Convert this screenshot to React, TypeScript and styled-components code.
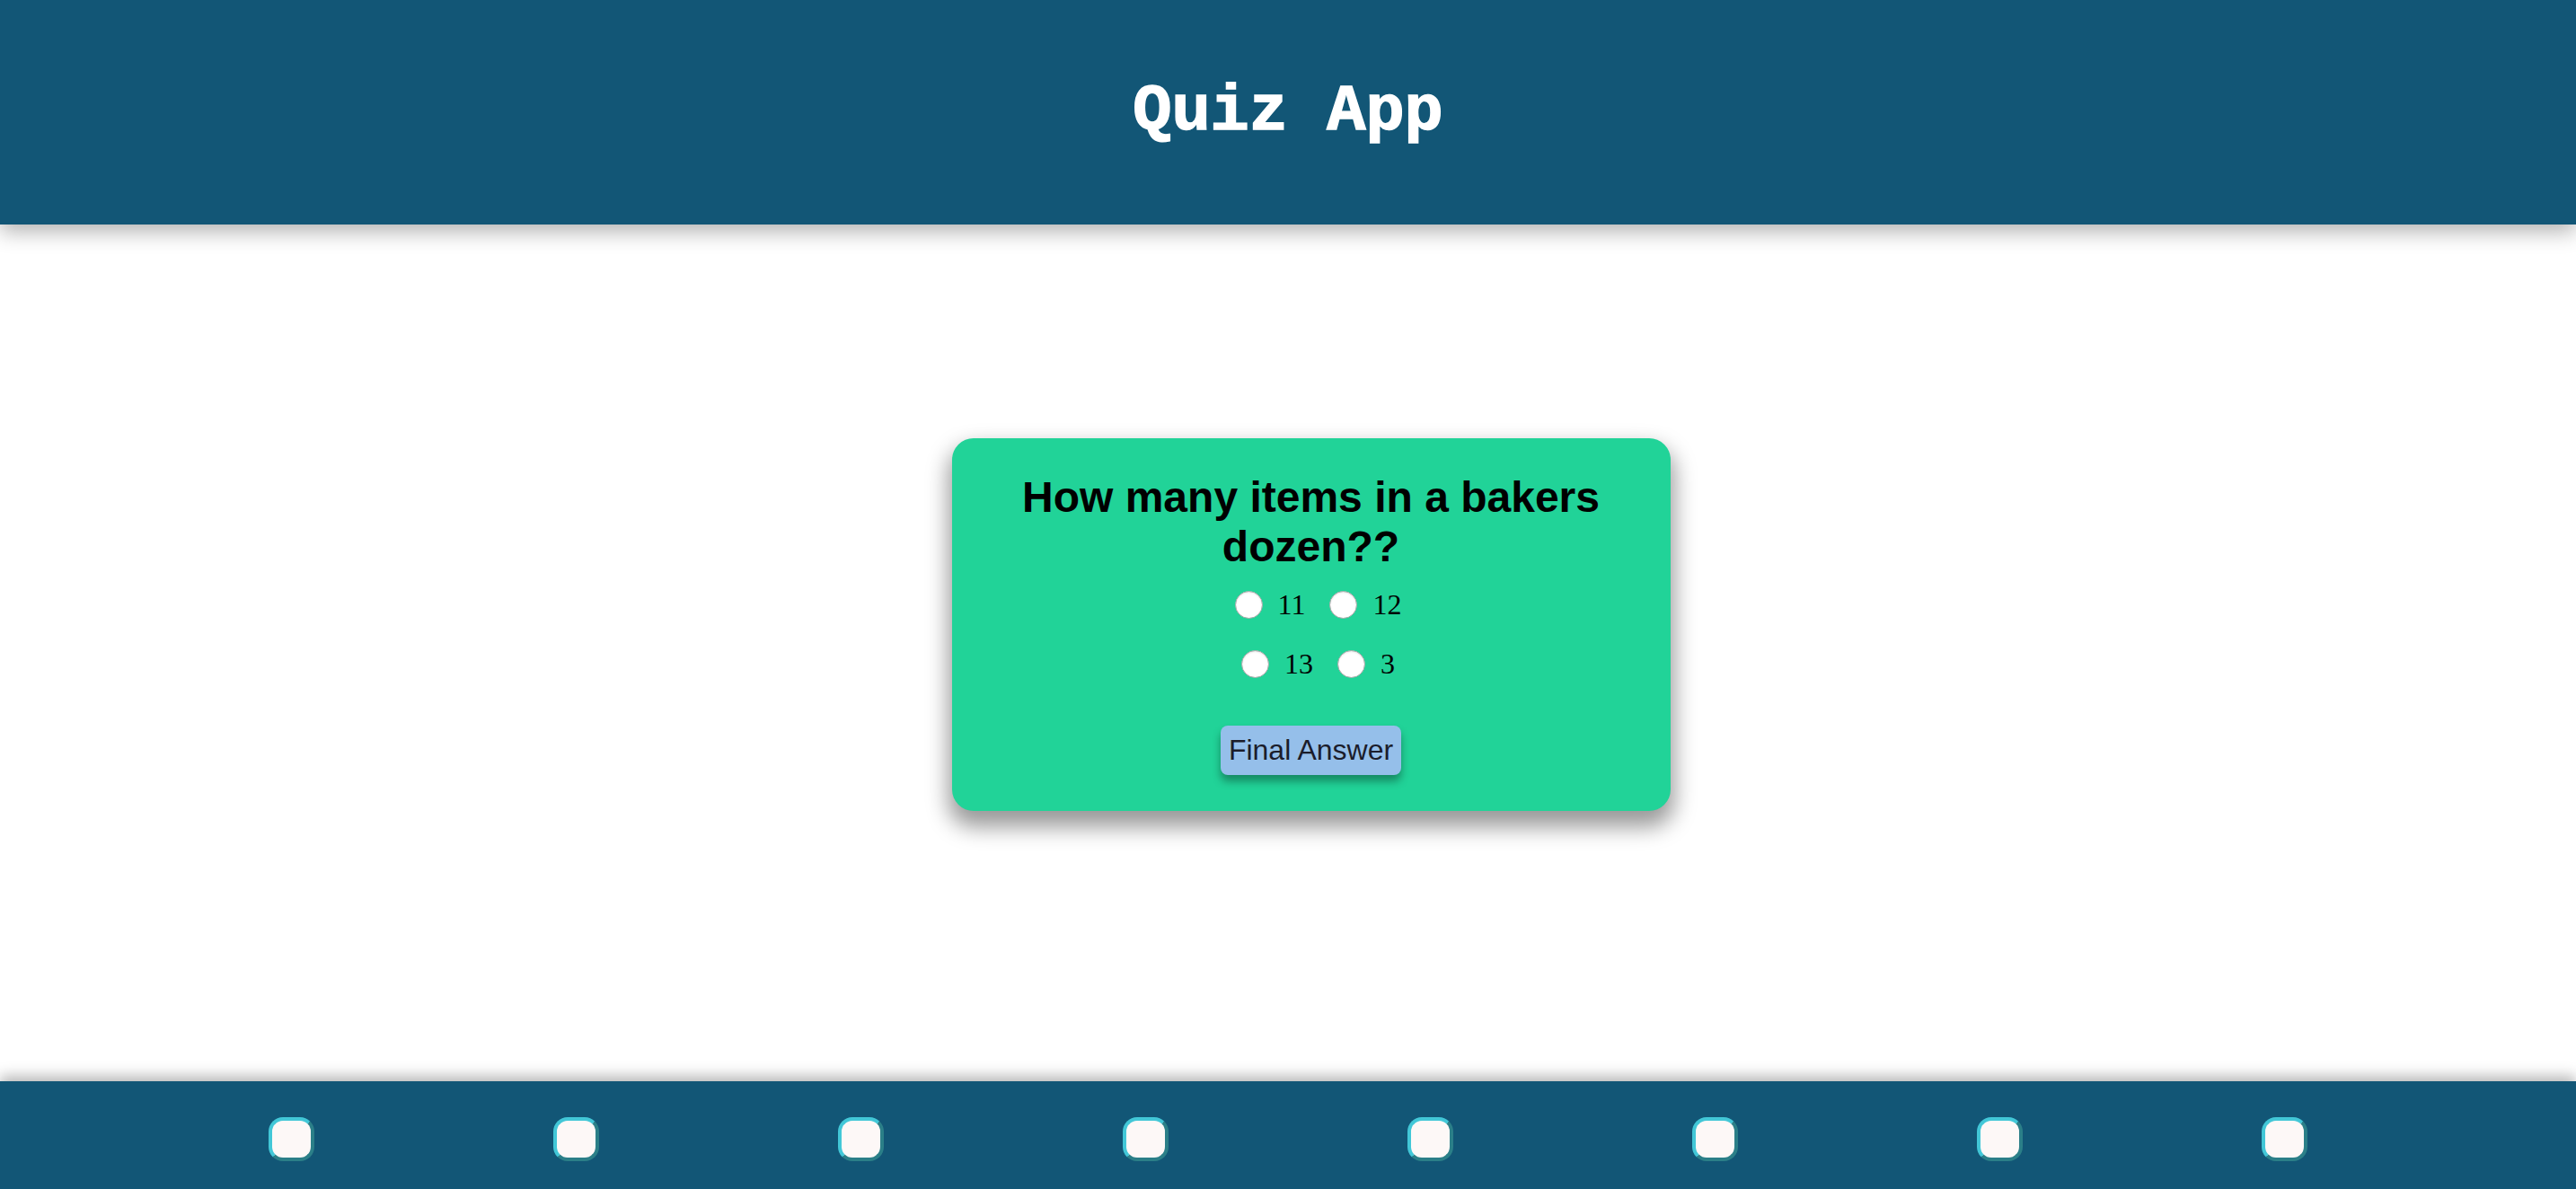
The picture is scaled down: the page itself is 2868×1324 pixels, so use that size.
import React, { useState } from "react";
import styled, { createGlobalStyle } from "styled-components";

const GlobalStyle = createGlobalStyle`
  html, body { margin: 0; padding: 0; background: #ffffff; }
  body { font-family: "Liberation Sans", Arial, sans-serif; }
  * { box-sizing: border-box; }
`;

const Page = styled.div`
  min-height: 100vh;
  display: flex;
  flex-direction: column;
`;

const Header = styled.header`
  height: 250px;
  flex-shrink: 0;
  background: #125676;
  display: flex;
  align-items: center;
  justify-content: center;
  box-shadow: 0 8px 22px rgba(0, 0, 0, 0.3);
  position: relative;
  z-index: 2;
`;

const Title = styled.h1`
  margin: 0;
  color: #ffffff;
  font-family: "Liberation Mono", "Courier New", monospace;
  font-weight: 700;
  font-size: 72px;
  line-height: 1;
  -webkit-text-stroke: 1.5px #ffffff;
`;

const Main = styled.main`
  flex: 1;
  display: flex;
  justify-content: center;
  align-items: flex-start;
  padding-top: 238px;
`;

const Card = styled.section`
  width: 800px;
  margin-left: 51px;
  background: #21d398;
  border-radius: 24px;
  padding: 38px 40px 40px;
  display: flex;
  flex-direction: column;
  align-items: center;
  box-shadow: 0 14px 24px 4px rgba(0, 0, 0, 0.4);
`;

const Question = styled.h2`
  margin: 0;
  font-family: "Liberation Sans", Arial, sans-serif;
  font-weight: 700;
  font-size: 48px;
  line-height: 55px;
  color: #000;
  text-align: center;
`;

const Options = styled.div`
  margin-top: 19px;
  display: flex;
  flex-direction: column;
  align-items: center;
  gap: 29px;
`;

const OptionRow = styled.div`
  display: flex;
  align-items: center;
  gap: 27px;
  padding-left: 16px;
  height: 37px;
`;

const Option = styled.label`
  display: flex;
  align-items: center;
  gap: 17px;
  font-family: "Liberation Serif", "Times New Roman", serif;
  font-size: 32px;
  color: #000;
  cursor: pointer;
`;

const Radio = styled.input`
  appearance: none;
  -webkit-appearance: none;
  margin: 0;
  width: 31px;
  height: 31px;
  border-radius: 50%;
  background: #ffffff;
  border: 1.5px solid #a8a8a8;
  box-shadow: inset 0 1px 2px rgba(0, 0, 0, 0.1);
  &:checked {
    background: radial-gradient(circle, #1a73e8 0 38%, #ffffff 42%);
    border-color: #1a73e8;
  }
`;

const SubmitButton = styled.button`
  margin-top: 50px;
  height: 55px;
  padding: 0 9px;
  border: none;
  border-radius: 8px;
  background: #95bfea;
  color: #1b1d2b;
  font-family: "Liberation Sans", Arial, sans-serif;
  font-size: 32px;
  box-shadow: 0 7px 10px rgba(0, 0, 0, 0.35);
  cursor: pointer;
`;

const Footer = styled.footer`
  height: 120px;
  flex-shrink: 0;
  background: #125676;
  display: flex;
  align-items: center;
  justify-content: center;
  gap: 266px;
  padding-top: 9px;
  box-shadow: 0 -6px 14px rgba(0, 0, 0, 0.28);
  position: relative;
  z-index: 2;
`;

const NavDot = styled.button<{ $active?: boolean }>`
  width: 51px;
  height: 49px;
  padding: 0;
  border-radius: 16px;
  border-width: 4px;
  border-style: solid;
  border-color: #42c7d7 #2b7f88 #2b7f88 #42c7d7;
  background: ${(p) => (p.$active ? "#dff5f8" : "#fdf8f7")};
  cursor: pointer;
`;

const options = [
  ["11", "12"],
  ["13", "3"],
];

export default function App() {
  const [choice, setChoice] = useState<string | null>(null);
  return (
    <>
      <GlobalStyle />
      <Page>
        <Header>
          <Title>Quiz App</Title>
        </Header>
        <Main>
          <Card>
            <Question>How many items in a bakers dozen??</Question>
            <Options>
              {options.map((row, i) => (
                <OptionRow key={i}>
                  {row.map((o) => (
                    <Option key={o}>
                      <Radio
                        type="radio"
                        name="answer"
                        value={o}
                        checked={choice === o}
                        onChange={() => setChoice(o)}
                      />
                      {o}
                    </Option>
                  ))}
                </OptionRow>
              ))}
            </Options>
            <SubmitButton type="button">Final Answer</SubmitButton>
          </Card>
        </Main>
        <Footer>
          {Array.from({ length: 8 }).map((_, i) => (
            <NavDot key={i} type="button" aria-label={`Question ${i + 1}`} />
          ))}
        </Footer>
      </Page>
    </>
  );
}
